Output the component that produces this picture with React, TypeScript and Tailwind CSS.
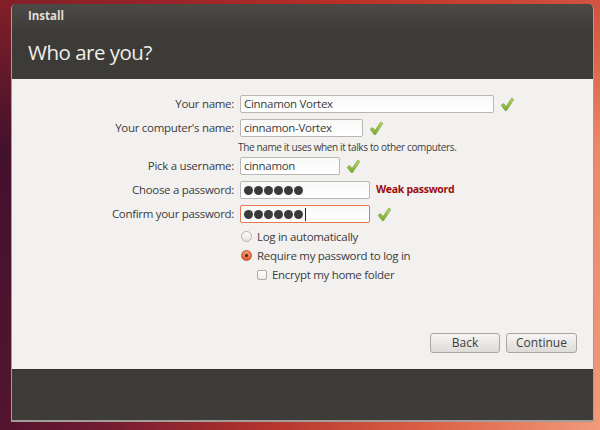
import React from 'react';

const font = { fontFamily: '"Open Sans", "Noto Sans", sans-serif' };

function Check() {
  return (
    <svg width="15" height="15" viewBox="0 0 15 15" className="shrink-0">
      <defs>
        <linearGradient id="ck" x1="0" y1="0" x2="0" y2="1">
          <stop offset="0" stopColor="#bfe06a" />
          <stop offset="1" stopColor="#78a82a" />
        </linearGradient>
      </defs>
      <path
        d="M1.2 8.2 L3.6 6.6 L6.1 9.6 L11.6 1.2 L13.8 2.4 L6.6 13.6 L5.2 13.6 Z"
        fill="url(#ck)"
        stroke="#66921f"
        strokeWidth="0.6"
        strokeLinejoin="round"
      />
    </svg>
  );
}

function Dots({ caret }: { caret?: boolean }) {
  return (
    <div className="flex items-center gap-[1px]">
      {[0, 1, 2, 3, 4, 5].map((i) => (
        <div key={i} className="w-[9px] h-[9px] rounded-full bg-[#3a3a3a]" />
      ))}
      {caret && <div className="w-[1px] h-[13px] bg-[#222] ml-[1px]" />}
    </div>
  );
}

function Field({
  label,
  width,
  children,
  focused,
  after,
}: {
  label: string;
  width: string;
  children: React.ReactNode;
  focused?: boolean;
  after?: React.ReactNode;
}) {
  return (
    <div className="flex items-center h-[18px]">
      <div className="w-[228px] text-right pr-[6px] text-[11.5px] tracking-[-0.3px] text-[#3c3c3c] whitespace-nowrap">
        {label}
      </div>
      <div
        className={`${width} h-[18px] flex items-center pl-[3px] rounded-[2px] bg-gradient-to-b from-[#f8f8f7] to-white text-[11.5px] tracking-[-0.3px] text-[#3c3c3c] border ${
          focused ? 'border-[#e4784e]' : 'border-[#bab7b2]'
        }`}
      >
        {children}
      </div>
      {after}
    </div>
  );
}

export default function App() {
  return (
    <div
      className="w-[600px] h-[430px] pt-[4px] pl-[11px] bg-[linear-gradient(180deg,rgba(190,45,35,0.55)_0%,rgba(190,45,35,0)_35%),linear-gradient(100deg,#3a0f2c_0%,#6e1a32_25%,#b3322c_50%,#dc6247_75%,#f19a7c_100%)] overflow-hidden"
      style={font}
    >
      <div className="w-[583px] h-[418px] flex flex-col rounded-t-[5px] overflow-hidden border-x border-b-2 border-[#a39e9a]">
        {/* Header */}
        <div className="h-[75px] bg-gradient-to-b from-[#4b4a45] to-[#3c3b37] to-[40%] px-[16px] pt-[3px]">
          <div className="text-[11.5px] font-bold text-[#e2ded7]">Install</div>
          <div className="mt-[14px] text-[20.5px] leading-[28px] tracking-[-0.5px] text-[#f0eeea]">Who are you?</div>
        </div>

        {/* Content */}
        <div className="h-[290px] bg-[#f2f1f0] pt-[16px] flex flex-col">
          <div className="flex flex-col">
            <Field label="Your name:" width="w-[254px]" after={<div className="ml-[6px]"><Check /></div>}>
              Cinnamon Vortex
            </Field>
            <div className="h-[6px]" />
            <Field label="Your computer's name:" width="w-[123px]" after={<div className="ml-[6px]"><Check /></div>}>
              cinnamon-Vortex
            </Field>
            <div className="h-[20px] pl-[226px] text-[10px] leading-[20px] text-[#3c3c3c] tracking-[-0.35px]">
              The name it uses when it talks to other computers.
            </div>
            <Field label="Pick a username:" width="w-[100px]" after={<div className="ml-[6px]"><Check /></div>}>
              cinnamon
            </Field>
            <div className="h-[6px]" />
            <Field
              label="Choose a password:"
              width="w-[130px]"
              after={<div className="ml-[6px] text-[10.5px] tracking-[-0.3px] font-bold text-[#9b0c0c]">Weak password</div>}
            >
              <Dots />
            </Field>
            <div className="h-[6px]" />
            <Field label="Confirm your password:" width="w-[130px]" focused after={<div className="ml-[7px]"><Check /></div>}>
              <Dots caret />
            </Field>

            <div className="pl-[229px] mt-[4px] flex flex-col text-[11.5px] tracking-[-0.3px] text-[#3c3c3c]">
              <div className="h-[19px] flex items-center gap-[5px]">
                <div className="w-[11px] h-[11px] rounded-full border border-[#b3afab] bg-gradient-to-b from-[#fdfdfd] to-[#e6e4e1]" />
                <span>Log in automatically</span>
              </div>
              <div className="h-[19px] flex items-center gap-[5px]">
                <div className="w-[11px] h-[11px] rounded-full border border-[#c4512c] bg-gradient-to-b from-[#f59a72] to-[#e05a32] flex items-center justify-center">
                  <div className="w-[3px] h-[3px] rounded-full bg-[#3a2a25]" />
                </div>
                <span>Require my password to log in</span>
              </div>
              <div className="h-[19px] flex items-center gap-[5px] pl-[16px]">
                <div className="w-[10px] h-[10px] rounded-[2px] border border-[#aeaaa6] bg-gradient-to-b from-white to-[#eeece9]" />
                <span>Encrypt my home folder</span>
              </div>
            </div>
          </div>

          <div className="mt-auto mb-[16px] pr-[16px] flex justify-end gap-[6px]">
            <button className="w-[70px] h-[20px] rounded-[3px] border border-[#a9a6a1] bg-gradient-to-b from-[#f6f5f4] to-[#dddbd7] text-[12px] text-[#3c3c3c]">
              Back
            </button>
            <button className="w-[71px] h-[20px] rounded-[3px] border border-[#a9a6a1] bg-gradient-to-b from-[#f6f5f4] to-[#dddbd7] text-[12px] text-[#3c3c3c]">
              Continue
            </button>
          </div>
        </div>

        {/* Footer */}
        <div className="flex-1 bg-[#3d3c38] border-t border-[#34332f]" />
      </div>
    </div>
  );
}
